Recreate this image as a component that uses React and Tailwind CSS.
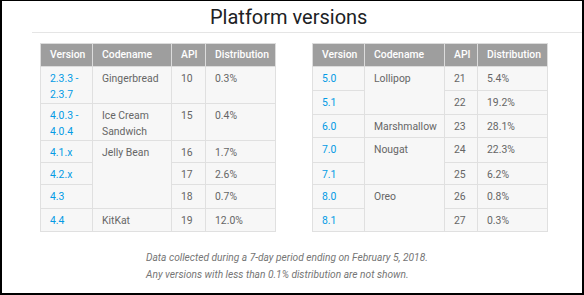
import React from 'react'

const left = [
  { v: ['2.3.3 -', '2.3.7'], name: 'Gingerbread', span: 1, api: 10, dist: '0.3%', h: 'h-[37px]' },
  { v: ['4.0.3 -', '4.0.4'], name: ['Ice Cream', 'Sandwich'], span: 1, api: 15, dist: '0.4%', h: 'h-[37px]' },
  { v: ['4.1.x'], name: 'Jelly Bean', span: 3, api: 16, dist: '1.7%', h: 'h-[22px]' },
  { v: ['4.2.x'], api: 17, dist: '2.6%', h: 'h-[22px]' },
  { v: ['4.3'], api: 18, dist: '0.7%', h: 'h-[24px]' },
  { v: ['4.4'], name: 'KitKat', span: 1, api: 19, dist: '12.0%', h: 'h-[23px]' },
]

const right = [
  { v: ['5.0'], name: 'Lollipop', span: 2, api: 21, dist: '5.4%', h: 'h-[24px]' },
  { v: ['5.1'], api: 22, dist: '19.2%', h: 'h-[24px]' },
  { v: ['6.0'], name: 'Marshmallow', span: 1, api: 23, dist: '28.1%', h: 'h-[23px]' },
  { v: ['7.0'], name: 'Nougat', span: 2, api: 24, dist: '22.3%', h: 'h-[25px]' },
  { v: ['7.1'], api: 25, dist: '6.2%', h: 'h-[22px]' },
  { v: ['8.0'], name: 'Oreo', span: 2, api: 26, dist: '0.8%', h: 'h-[24px]' },
  { v: ['8.1'], api: 27, dist: '0.3%', h: 'h-[23px]' },
]

const td = 'border border-[#e0e0e0] align-top pt-[4px] pl-[9px] pr-[4px]'

function Lines({ items }) {
  if (!Array.isArray(items)) return items
  return items.map((t, i) => <div key={i}>{t}</div>)
}

function VersionTable({ rows, cols }) {
  return (
    <table className="table-fixed border-collapse border border-[#e0e0e0] bg-[#f7f7f7] text-[10.4px] leading-[16px] text-[#666666]">
      <colgroup>
        {cols.map((w, i) => <col key={i} style={{ width: w }} />)}
      </colgroup>
      <thead>
        <tr className="h-[23px] bg-[#9e9e9e] text-white font-medium text-left">
          <th className="border border-[#dcdcdc] pl-[9px] font-medium">Version</th>
          <th className="border border-[#dcdcdc] pl-[9px] font-medium">Codename</th>
          <th className="border border-[#dcdcdc] pl-[9px] font-medium">API</th>
          <th className="border border-[#dcdcdc] pl-[9px] font-medium">Distribution</th>
        </tr>
      </thead>
      <tbody>
        {rows.map((r, i) => (
          <tr key={i} className={r.h}>
            <td className={td + ' text-[#039be5]'}><Lines items={r.v} /></td>
            {r.name && <td rowSpan={r.span} className={td}><Lines items={r.name} /></td>}
            <td className={td}>{r.api}</td>
            <td className={td}>{r.dist}</td>
          </tr>
        ))}
      </tbody>
    </table>
  )
}

export default function App() {
  return (
    <div className="w-[584px] h-[295px] bg-white border-t border-l-2 border-r-2 border-b-2 border-black font-['Roboto',sans-serif] overflow-hidden">
      <div className="ml-[30px] h-[32px] border-b border-[#e5e5e5] flex items-end pl-[178px]">
        <h1 className="text-[20px] leading-[28px] text-[#202124] mb-[1px]">Platform versions</h1>
      </div>
      <div className="flex gap-[36px] pl-[38px] pt-[10px]">
        <VersionTable rows={left} cols={[52, 79, 34, 70]} />
        <VersionTable rows={right} cols={[52, 80, 33, 70]} />
      </div>
      <div className="pl-[144px] pt-[17px] italic text-[10.2px] leading-[17px] text-[#757575]">
        <p>Data collected during a 7-day period ending on February 5, 2018.</p>
        <p>Any versions with less than 0.1% distribution are not shown.</p>
      </div>
    </div>
  )
}
